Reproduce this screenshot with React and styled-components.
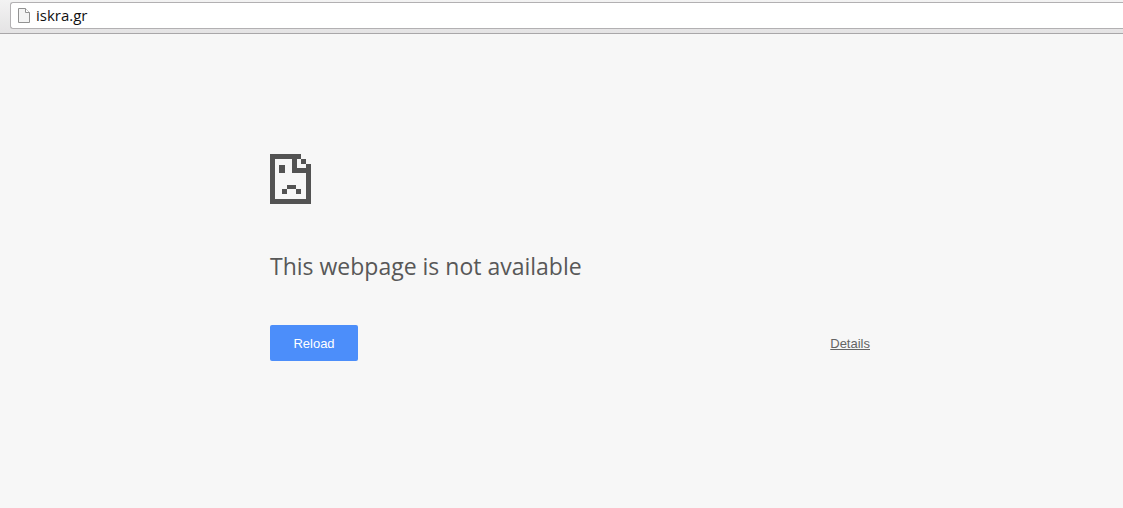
import React from "react";
import styled, { createGlobalStyle } from "styled-components";

const GlobalStyle = createGlobalStyle`
  * { box-sizing: border-box; }
  body {
    margin: 0;
    background: #f7f7f7;
    color: #585858;
    font-family: "Liberation Sans", Arial, sans-serif;
    font-size: 13px;
  }
`;

const Toolbar = styled.header`
  display: flex;
  height: 34px;
  padding: 2px 0 4px 10px;
  background: linear-gradient(#f3f3f3, #e4e3e4);
  border-bottom: 1px solid #a9a7a9;
`;

const AddressBar = styled.label`
  display: flex;
  flex: 1;
  align-items: center;
  gap: 6px;
  padding-left: 7px;
  background: #fff;
  border: 1px solid #b2b0b2;
  border-right: 0;
  border-radius: 3px 0 0 3px;
`;

const AddressInput = styled.input`
  flex: 1;
  min-width: 0;
  height: 24px;
  padding: 0 0 2px;
  border: 0;
  outline: 0;
  background: transparent;
  color: #111;
  font-family: "Open Sans", "Noto Sans", sans-serif;
  font-size: 15px;
`;

const Page = styled.main`
  padding: 120px 0 0 17px;
`;

const ErrorPanel = styled.section`
  max-width: 600px;
  margin: 0 auto;
`;

const SadPage = styled.svg`
  display: block;
  width: 41px;
  height: 50px;
  fill: #535353;
`;

const Title = styled.h1`
  margin: 45px 0 42px;
  font-family: "Open Sans", "Noto Sans", sans-serif;
  font-size: 23px;
  font-weight: 400;
  line-height: 34px;
`;

const Actions = styled.div`
  display: flex;
  align-items: center;
  justify-content: space-between;
`;

const ReloadButton = styled.button`
  width: 88px;
  height: 36px;
  padding: 0;
  border: 0;
  border-radius: 2px;
  background: #4c8efa;
  color: #fff;
  font: inherit;
`;

const DetailsLink = styled.a`
  color: #646464;
  text-decoration: underline;
`;

function FileIcon() {
  return (
    <svg width="12" height="15" viewBox="0 0 12 15" aria-hidden="true">
      <path d="M.5.5h7l4 4v10H.5z" fill="#f4f4f4" stroke="#929292" />
      <path d="M7.5.5v4h4" fill="#fff" stroke="#929292" />
    </svg>
  );
}

export default function App() {
  return (
    <>
      <GlobalStyle />
      <Toolbar>
        <AddressBar>
          <FileIcon />
          <AddressInput aria-label="Address" defaultValue="iskra.gr" spellCheck={false} />
        </AddressBar>
      </Toolbar>
      <Page>
        <ErrorPanel>
          <SadPage viewBox="0 0 41 50" shapeRendering="crispEdges" aria-hidden="true">
            <path
              fillRule="evenodd"
              d="M0 0H31V5H36V10H41V50H0ZM5 5V45H36V19H22V5ZM27 5V14H36V10H31V5Z"
            />
            <path d="M9 11h6v8H9zM17 31h9v4h5v5h-5v-5h-9v5h-5v-5h5z" />
          </SadPage>
          <Title>This webpage is not available</Title>
          <Actions>
            <ReloadButton type="button">Reload</ReloadButton>
            <DetailsLink href="#details">Details</DetailsLink>
          </Actions>
        </ErrorPanel>
      </Page>
    </>
  );
}
